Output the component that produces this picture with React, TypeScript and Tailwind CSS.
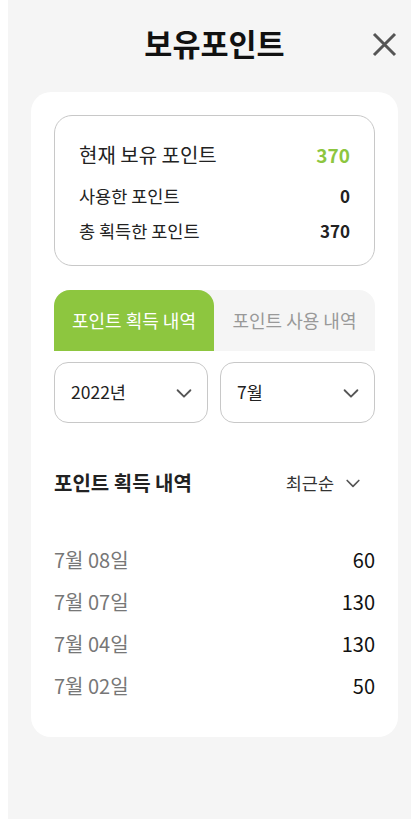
import React from 'react';

const rows = [
  { date: '7월 08일', point: 60 },
  { date: '7월 07일', point: 130 },
  { date: '7월 04일', point: 130 },
  { date: '7월 02일', point: 50 },
];

const Chevron = ({ className = '' }: { className?: string }) => (
  <svg viewBox="0 0 24 24" className={className} fill="none" stroke="currentColor" strokeWidth={2} strokeLinecap="round" strokeLinejoin="round">
    <path d="M5 9l7 7 7-7" />
  </svg>
);

export default function App() {
  return (
    <div className="w-[411px] min-h-[819px] overflow-hidden bg-white" style={{ fontFamily: '"Noto Sans CJK KR", "Noto Sans", sans-serif' }}>
      <div className="ml-2 w-[413px] min-h-[819px] bg-[#f5f5f5] pb-10">
        {/* header */}
        <div className="relative h-[92px] flex items-center justify-center">
          <h1 className="text-[30.5px] font-bold text-[#111] leading-none -mt-[6px]">보유포인트</h1>
          <button className="absolute right-[24px] top-[32px] w-[25px] h-[25px] text-[#555]">
            <svg viewBox="0 0 25 25" className="w-full h-full" fill="none" stroke="currentColor" strokeWidth={3}>
              <path d="M2 2l21 21M23 2L2 23" />
            </svg>
          </button>
        </div>

        <div className="mx-[23px] bg-white rounded-[20px] px-[23px] pt-[23px] pb-[30px]">
          {/* summary */}
          <div className="h-[151px] border border-[#c8c8c8] rounded-[18px] px-[24px] pt-[24px]">
            <div className="flex justify-between items-center h-[30px]">
              <span className="text-[20px] text-[#222]">현재 보유 포인트</span>
              <span className="text-[19px] font-bold text-[#8dc63f]">370</span>
            </div>
            <div className="flex justify-between items-center h-[28px] mt-[12px]">
              <span className="text-[17.5px] text-[#222]">사용한 포인트</span>
              <span className="text-[17px] font-bold text-[#222]">0</span>
            </div>
            <div className="flex justify-between items-center h-[28px] mt-[7px]">
              <span className="text-[17.5px] text-[#222]">총 획득한 포인트</span>
              <span className="text-[17px] font-bold text-[#222]">370</span>
            </div>
          </div>

          {/* tabs */}
          <div className="mt-[24px] flex h-[61px] bg-[#f5f5f5] rounded-t-[16px]">
            <button className="w-[160px] h-full bg-[#8dc63f] rounded-t-[16px] text-white text-[18px]">포인트 획득 내역</button>
            <button className="flex-1 h-full text-[#999] text-[18px]">포인트 사용 내역</button>
          </div>

          {/* selects */}
          <div className="mt-[11px] flex gap-[12px]">
            <div className="w-[154px] h-[61px] border border-[#c8c8c8] rounded-[14px] flex items-center justify-between pl-[16px] pr-[12px]">
              <span className="text-[17.5px] text-[#222]">2022년</span>
              <Chevron className="w-[22px] h-[22px] text-[#555]" />
            </div>
            <div className="flex-1 h-[61px] border border-[#c8c8c8] rounded-[14px] flex items-center justify-between pl-[16px] pr-[12px]">
              <span className="text-[17.5px] text-[#222]">7월</span>
              <Chevron className="w-[22px] h-[22px] text-[#555]" />
            </div>
          </div>

          {/* list heading */}
          <div className="mt-[45px] flex items-center justify-between h-[30px]">
            <h2 className="text-[20px] font-bold text-[#222]">포인트 획득 내역</h2>
            <div className="flex items-center gap-[9px] pr-[12px]">
              <span className="text-[17.5px] text-[#333]">최근순</span>
              <Chevron className="w-[20px] h-[20px] text-[#555]" />
            </div>
          </div>

          {/* list */}
          <div className="mt-[41px] flex flex-col">
            {rows.map((r, i) => (
              <div key={i} className="flex items-center justify-between h-[42px]">
                <span className="text-[20px] text-[#777]">{r.date}</span>
                <span className="text-[20px] text-[#111]">{r.point}</span>
              </div>
            ))}
          </div>
        </div>
      </div>
    </div>
  );
}
